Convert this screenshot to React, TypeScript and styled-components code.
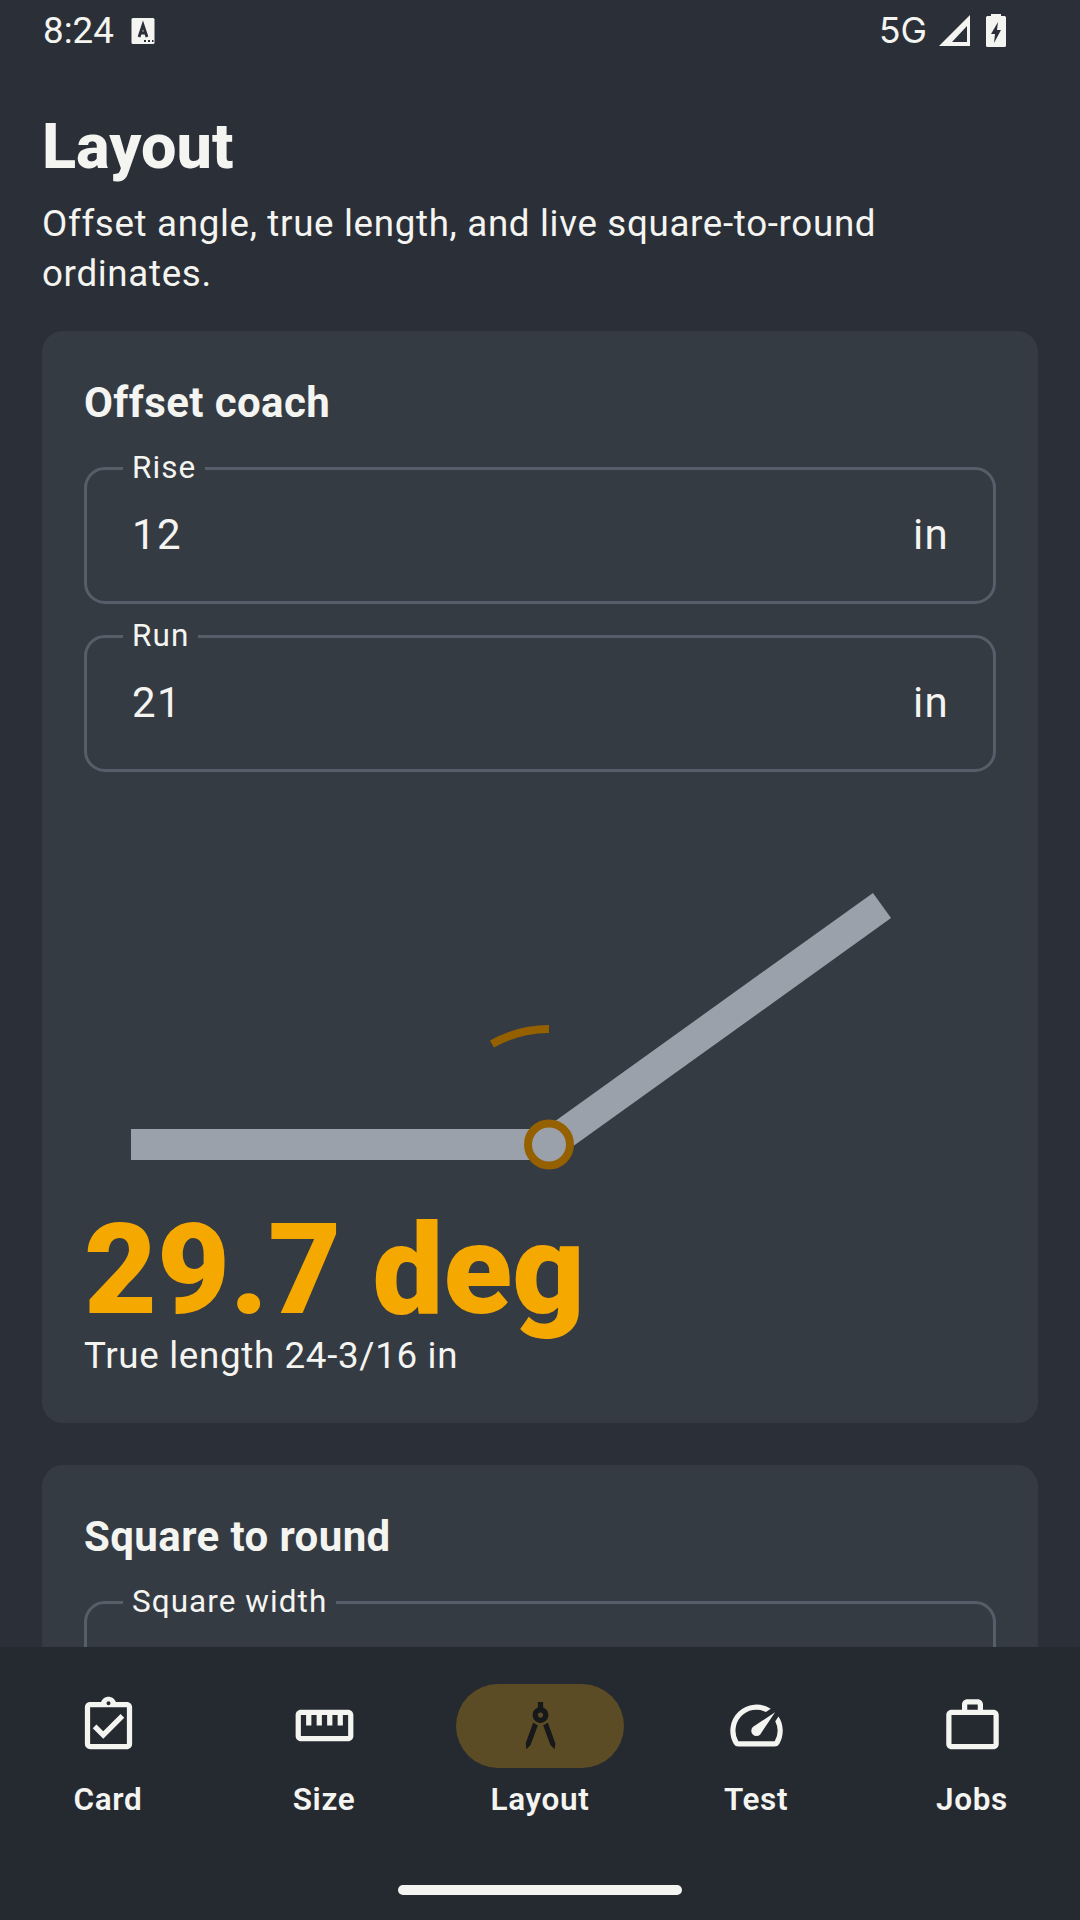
import React from 'react';
import styled, { createGlobalStyle } from 'styled-components';
import {
  MdOutlineAssignmentTurnedIn,
  MdOutlineStraighten,
  MdArchitecture,
  MdOutlineSpeed,
  MdOutlineWorkOutline,
} from 'react-icons/md';

const GlobalStyle = createGlobalStyle`
  html, body {
    margin: 0;
    padding: 0;
    background: #2b3038;
  }
  * { box-sizing: border-box; }
`;

// --- Styled Components ---

const Screen = styled.div`
  width: 1080px;
  height: 1920px;
  display: flex;
  flex-direction: column;
  overflow: hidden;
  background: #2b3038;
  color: #f4f4f1;
  font-family: Roboto, "Noto Sans", sans-serif;
`;

const StatusBar = styled.div`
  height: 63px;
  flex: none;
  display: flex;
  align-items: center;
  justify-content: space-between;
  padding: 0 74px 2px 43px;
`;

const StatusGroup = styled.div`
  display: flex;
  align-items: center;
`;

const Time = styled.span`
  font-size: 36.75px;
  margin-right: 17px;
`;

const Network = styled.span`
  font-family: Inter, Roboto, sans-serif;
  font-size: 35.5px;
  margin-right: 11px;
`;

const BatterySlot = styled.span`
  display: flex;
  margin-left: 15px;
`;

const Scroll = styled.main`
  flex: 1;
  min-height: 0;
  overflow: hidden;
  padding: 0 42px;
`;

const Title = styled.h1`
  margin: 42px 0 0;
  font-size: 63px;
  line-height: 84px;
  font-weight: 800;
`;

const Subtitle = styled.p`
  margin: 10px 0 0;
  font-size: 36.75px;
  line-height: 50px;
  letter-spacing: 0.66px;
  font-weight: 400;
  max-width: 900px;
`;

const Card = styled.section`
  margin-top: 32px;
  margin-bottom: 42px;
  padding: 42px;
  border-radius: 21px;
  background: #353b43;
  & + & { margin-top: 0; }
`;

const CardTitle = styled.h2`
  margin: 1px 0 0;
  font-size: 42px;
  line-height: 58px;
  letter-spacing: 0.4px;
  font-weight: 700;
`;

const FieldBox = styled.fieldset`
  margin: 0;
  padding: 0 44px 0 45px;
  height: 152px;
  border: 3px solid #565e69;
  border-radius: 21px;
  display: flex;
  align-items: center;
  justify-content: space-between;
  & + & { margin-top: 16px; }
`;

const FieldLegend = styled.legend`
  margin-left: -9px;
  padding: 0 9px;
  font-size: 31.5px;
  line-height: 32px;
  letter-spacing: 1.05px;
  font-weight: 400;
`;

const FieldText = styled.span`
  font-size: 42px;
  letter-spacing: 1.31px;
  font-weight: 400;
  margin-top: -17px;
`;

const Fields = styled.div`
  margin-top: 20px;
`;

const Diagram = styled.svg`
  display: block;
  width: 912px;
  height: 420px;
  margin-top: 18px;
`;

const BigValue = styled.div`
  font-size: 126px;
  line-height: 121px;
  font-weight: 900;
  color: #f5a800;
`;

const Caption = styled.div`
  font-size: 36.75px;
  line-height: 50px;
  letter-spacing: 0.66px;
  font-weight: 400;
`;

const Nav = styled.nav`
  height: 273px;
  flex: none;
  display: flex;
  flex-direction: column;
  background: #252930;
`;

const NavItems = styled.div`
  display: grid;
  grid-template-columns: repeat(5, 216px);
  padding-top: 37px;
`;

const NavItem = styled.div`
  display: flex;
  flex-direction: column;
  align-items: center;
`;

const IconPill = styled.div<{ $active?: boolean }>`
  width: 168px;
  height: 84px;
  border-radius: 42px;
  display: flex;
  align-items: center;
  justify-content: center;
  font-size: 63px;
  padding-bottom: 2px;
  background: ${props => (props.$active ? '#5c4c26' : 'transparent')};
  color: ${props => (props.$active ? '#17181a' : '#f4f4f1')};
`;

const NavLabel = styled.span`
  margin-top: 11px;
  font-size: 31.5px;
  line-height: 42px;
  font-weight: 600;
  letter-spacing: 0.65px;
`;

const HomeIndicator = styled.div`
  width: 284px;
  height: 10px;
  margin: 64px auto 0;
  border-radius: 5px;
  background: #f4f4f1;
`;

// --- Component ---

function TextField({ label, value }: { label: string; value?: string }) {
  return (
    <FieldBox>
      <FieldLegend>{label}</FieldLegend>
      {value && <FieldText>{value}</FieldText>}
      {value && <FieldText>in</FieldText>}
    </FieldBox>
  );
}

function KeyboardIcon() {
  return (
    <svg width="24" height="28" viewBox="0 0 24 28">
      <rect x="0.5" y="1" width="23" height="26" rx="1.5" fill="#f4f4f1" />
      <path d="M8 20 L12 8 L16 20 M9.5 16 H14.5" fill="none" stroke="#2b3038" strokeWidth="2.8" />
      <path d="M13 24 h2 M17 24 h2 M21 24 h1.5" stroke="#2b3038" strokeWidth="2" />
    </svg>
  );
}

function SignalIcon() {
  return (
    <svg width="33" height="33" viewBox="0 0 33 33">
      <path d="M1 32 L32 1 V32 Z M14 28 H29 V12 Z" fill="#f4f4f1" fillRule="evenodd" />
    </svg>
  );
}

function BatteryIcon() {
  return (
    <svg width="20" height="33" viewBox="0 0 20 33">
      <path
        d="M5 0 H15 V2 H18.5 Q20 2 20 3.5 V31.5 Q20 33 18.5 33 H1.5 Q0 33 0 31.5 V3.5 Q0 2 1.5 2 H5 Z"
        fill="#f4f4f1"
      />
      <path d="M12 8 L5 20 H9 L8 29 L15 16 H11 Z" fill="#2b3038" />
    </svg>
  );
}

const tabs = [
  { label: 'Card', icon: <MdOutlineAssignmentTurnedIn /> },
  { label: 'Size', icon: <MdOutlineStraighten /> },
  { label: 'Layout', icon: <MdArchitecture />, active: true },
  { label: 'Test', icon: <MdOutlineSpeed /> },
  { label: 'Jobs', icon: <MdOutlineWorkOutline /> },
];

export default function App() {
  return (
    <Screen>
      <GlobalStyle />
      <StatusBar>
        <StatusGroup>
          <Time>8:24</Time>
          <KeyboardIcon />
        </StatusGroup>
        <StatusGroup>
          <Network>5G</Network>
          <SignalIcon />
          <BatterySlot>
            <BatteryIcon />
          </BatterySlot>
        </StatusGroup>
      </StatusBar>

      <Scroll>
        <Title>Layout</Title>
        <Subtitle>Offset angle, true length, and live square-to-round ordinates.</Subtitle>

        <Card>
          <CardTitle>Offset coach</CardTitle>
          <Fields>
            <TextField label="Rise" value="12" />
            <TextField label="Run" value="21" />
          </Fields>
          <Diagram viewBox="84 790 912 420">
            <path d="M131 1144.5 H549" stroke="#9aa1ab" strokeWidth="31" fill="none" />
            <path d="M549 1144.5 L882 905.5" stroke="#9aa1ab" strokeWidth="31" fill="none" />
            <circle cx="549" cy="1144.5" r="21" stroke="#946000" strokeWidth="8" fill="#9aa1ab" />
            <path d="M549 1029 A115.5 115.5 0 0 0 492 1044" stroke="#946000" strokeWidth="8" fill="none" />
          </Diagram>
          <BigValue>29.7 deg</BigValue>
          <Caption>True length 24-3/16 in</Caption>
        </Card>

        <Card>
          <CardTitle>Square to round</CardTitle>
          <Fields>
            <TextField label="Square width" />
          </Fields>
        </Card>
      </Scroll>

      <Nav>
        <NavItems>
          {tabs.map(tab => (
            <NavItem key={tab.label}>
              <IconPill $active={tab.active}>{tab.icon}</IconPill>
              <NavLabel>{tab.label}</NavLabel>
            </NavItem>
          ))}
        </NavItems>
        <HomeIndicator />
      </Nav>
    </Screen>
  );
}
